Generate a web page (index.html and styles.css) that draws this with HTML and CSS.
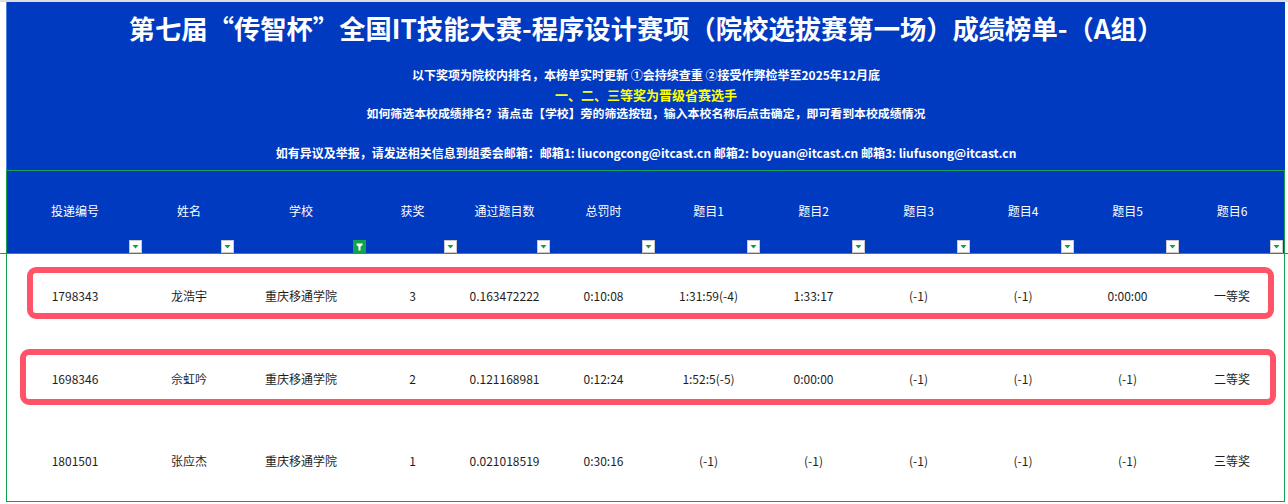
FILE: index.html
```html
<!DOCTYPE html>
<html lang="zh-CN">
<head>
<meta charset="utf-8">
<title>成绩榜单</title>
<link rel="stylesheet" href="styles.css">
</head>
<body>
<div class="topline"></div>
<div class="page">
  <header class="banner">
    <h1 class="title">第七届“传智杯”全国IT技能大赛-程序设计赛项（院校选拔赛第一场）成绩榜单-（A组）</h1>
    <p class="note l1">以下奖项为院校内排名，本榜单实时更新 ①会持续查重 ②接受作弊检举至2025年12月底</p>
    <p class="note l2">一、二、三等奖为晋级省赛选手</p>
    <p class="note l3">如何筛选本校成绩排名？请点击【学校】旁的筛选按钮，输入本校名称后点击确定，即可看到本校成绩情况</p>
    <p class="note l4">如有异议及举报，请发送相关信息到组委会邮箱：邮箱1: liucongcong@itcast.cn 邮箱2: boyuan@itcast.cn 邮箱3: liufusong@itcast.cn</p>
  </header>

  <div class="table">
    <div class="row head">
      <div class="cell"><span>投递编号</span><i class="filter"><svg viewBox="0 0 11 11"><polygon points="2.5,4 8.5,4 5.5,7.5" /></svg></i></div>
      <div class="cell"><span>姓名</span><i class="filter"><svg viewBox="0 0 11 11"><polygon points="2.5,4 8.5,4 5.5,7.5" /></svg></i></div>
      <div class="cell"><span>学校</span><i class="filter on"><svg viewBox="0 0 11 11"><path d="M2.5 2.5h6v1.6l-2 1.6v3.8h-2v-3.8l-2-1.6z" /></svg></i></div>
      <div class="cell"><span>获奖</span><i class="filter"><svg viewBox="0 0 11 11"><polygon points="2.5,4 8.5,4 5.5,7.5" /></svg></i></div>
      <div class="cell"><span>通过题目数</span><i class="filter"><svg viewBox="0 0 11 11"><polygon points="2.5,4 8.5,4 5.5,7.5" /></svg></i></div>
      <div class="cell"><span>总罚时</span><i class="filter"><svg viewBox="0 0 11 11"><polygon points="2.5,4 8.5,4 5.5,7.5" /></svg></i></div>
      <div class="cell"><span>题目1</span><i class="filter"><svg viewBox="0 0 11 11"><polygon points="2.5,4 8.5,4 5.5,7.5" /></svg></i></div>
      <div class="cell"><span>题目2</span><i class="filter"><svg viewBox="0 0 11 11"><polygon points="2.5,4 8.5,4 5.5,7.5" /></svg></i></div>
      <div class="cell"><span>题目3</span><i class="filter"><svg viewBox="0 0 11 11"><polygon points="2.5,4 8.5,4 5.5,7.5" /></svg></i></div>
      <div class="cell"><span>题目4</span><i class="filter"><svg viewBox="0 0 11 11"><polygon points="2.5,4 8.5,4 5.5,7.5" /></svg></i></div>
      <div class="cell"><span>题目5</span><i class="filter"><svg viewBox="0 0 11 11"><polygon points="2.5,4 8.5,4 5.5,7.5" /></svg></i></div>
      <div class="cell"><span>题目6</span><i class="filter"><svg viewBox="0 0 11 11"><polygon points="2.5,4 8.5,4 5.5,7.5" /></svg></i></div>
    </div>

    <div class="row data">
      <div class="cell">1798343</div>
      <div class="cell">龙浩宇</div>
      <div class="cell">重庆移通学院</div>
      <div class="cell">3</div>
      <div class="cell">0.163472222</div>
      <div class="cell">0:10:08</div>
      <div class="cell">1:31:59(-4)</div>
      <div class="cell">1:33:17</div>
      <div class="cell">(-1)</div>
      <div class="cell">(-1)</div>
      <div class="cell">0:00:00</div>
      <div class="cell">一等奖</div>
    </div>

    <div class="row data">
      <div class="cell">1698346</div>
      <div class="cell">佘虹吟</div>
      <div class="cell">重庆移通学院</div>
      <div class="cell">2</div>
      <div class="cell">0.121168981</div>
      <div class="cell">0:12:24</div>
      <div class="cell">1:52:5(-5)</div>
      <div class="cell">0:00:00</div>
      <div class="cell">(-1)</div>
      <div class="cell">(-1)</div>
      <div class="cell">(-1)</div>
      <div class="cell">二等奖</div>
    </div>

    <div class="row data last">
      <div class="cell">1801501</div>
      <div class="cell">张应杰</div>
      <div class="cell">重庆移通学院</div>
      <div class="cell">1</div>
      <div class="cell">0.021018519</div>
      <div class="cell">0:30:16</div>
      <div class="cell">(-1)</div>
      <div class="cell">(-1)</div>
      <div class="cell">(-1)</div>
      <div class="cell">(-1)</div>
      <div class="cell">(-1)</div>
      <div class="cell">三等奖</div>
    </div>
  </div>
</div>

<div class="mark mark-1"></div>
<div class="mark mark-2"></div>
</body>
</html>
```

FILE: styles.css
```css
* { box-sizing: border-box; }

html, body {
  margin: 0;
  padding: 0;
  background: #ffffff;
}

body {
  width: 1288px;
  height: 504px;
  overflow: hidden;
  position: relative;
  font-family: "Noto Sans CJK SC", "Noto Sans", sans-serif;
}

.topline {
  height: 2px;
  background: #dedede;
}

.page {
  margin-left: 6px;
  width: 1279px;
}

.banner {
  height: 168px;
  background: #003ac1;
  border-left: 1px solid #4a7fdc;
  padding: 8px 0 8px;
  color: #ffffff;
  text-align: center;
}

.title {
  margin: 0;
  height: 36px;
  line-height: 36px;
  font-size: 26.3px;
  font-weight: 700;
  white-space: nowrap;
}

.note {
  margin: 0;
  height: 18px;
  line-height: 18px;
  font-size: 12px;
  font-weight: 700;
  white-space: nowrap;
}

.l1 { margin-top: 20px; }
.l2 { margin-top: 2px; color: #ffff00; font-size: 13px; }
.l3 { margin-top: 0; font-size: 11.9px; }
.l4 { margin-top: 22px; }

.table {
  border: 1px solid #12a150;
}

.row {
  display: grid;
  grid-template-columns: 136px 92px 132px 91px 93px 105px 105px 105px 105px 104px 105px 104px;
}

.head {
  position: relative;
  height: 83px;
  background: #003ac1;
  border-bottom: 1px solid #12a150;
}

.head::after {
  content: "";
  position: absolute;
  left: -7px;
  right: -5px;
  bottom: -1px;
  height: 1px;
  background: #12a150;
}

.head .cell {
  position: relative;
  display: flex;
  align-items: center;
  justify-content: center;
  padding-bottom: 3px;
  color: #ffffff;
  font-size: 12px;
}

.filter {
  position: absolute;
  right: 1px;
  bottom: 0;
  width: 13px;
  height: 13px;
  background: #ffffff;
  border: 1px solid #c9c9c9;
  display: flex;
  align-items: center;
  justify-content: center;
}

.filter svg {
  width: 11px;
  height: 11px;
  fill: #0f9d48;
}

.filter.on {
  background: #11a44c;
  border-color: #11a44c;
}

.filter.on svg {
  fill: #ffffff;
}

.data {
  height: 83px;
}

.data.last {
  height: 81px;
}

.data .cell {
  display: flex;
  align-items: center;
  justify-content: center;
  padding-bottom: 1px;
  font-size: 12px;
  color: #1e1e1e;
  white-space: nowrap;
}

.mark {
  position: absolute;
  border: 6px solid #ff5468;
  border-radius: 9px;
}

.mark-1 {
  left: 27px;
  top: 267px;
  width: 1247px;
  height: 52px;
}

.mark-2 {
  left: 20px;
  top: 349px;
  width: 1256px;
  height: 56px;
}
```
